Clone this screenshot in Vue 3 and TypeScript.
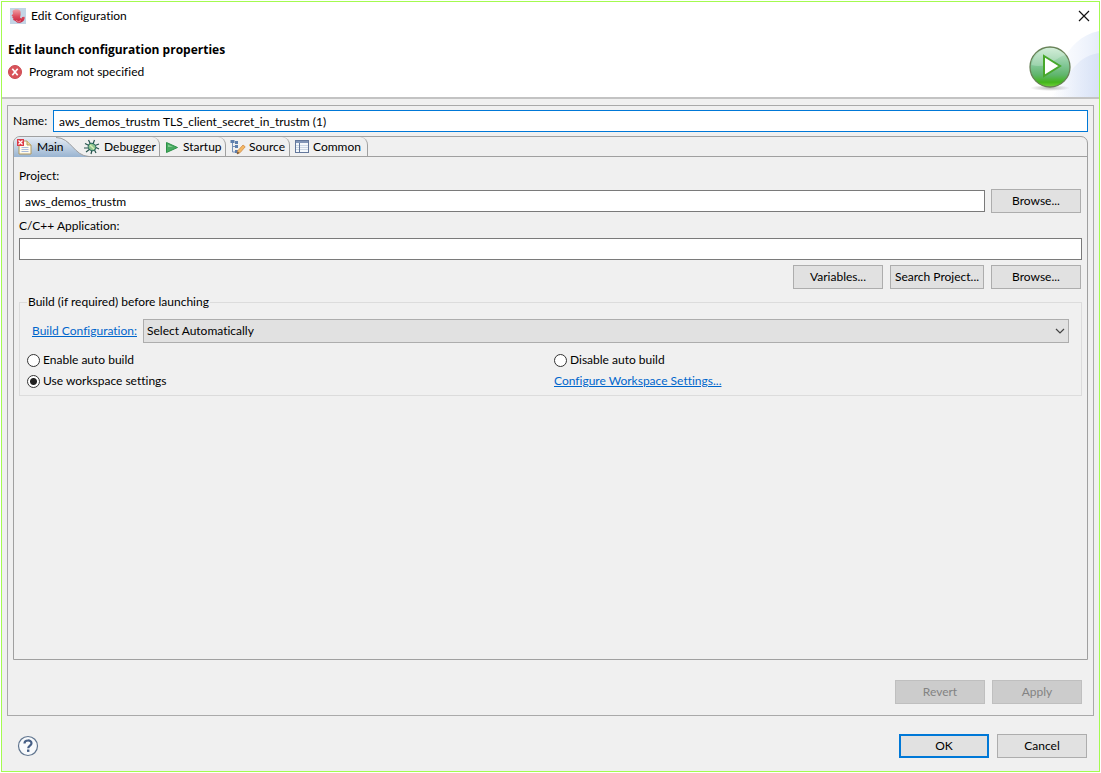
<script setup lang="ts">
import { ref } from 'vue'

const name = ref('aws_demos_trustm TLS_client_secret_in_trustm (1)')
const project = ref('aws_demos_trustm')
const application = ref('')
const buildConfig = ref('auto')
const autoBuild = ref('workspace')
</script>

<template>
  <main class="dialog">
    <header class="banner">
      <div class="titlebar">
        <svg class="app-icon" width="16" height="16" viewBox="0 0 16 16" aria-hidden="true">
          <defs>
            <linearGradient id="face" x1="0" y1="0" x2="0" y2="1">
              <stop offset="0" stop-color="#f0a3a8" />
              <stop offset="0.55" stop-color="#dc4c5c" />
              <stop offset="1" stop-color="#c4203c" />
            </linearGradient>
          </defs>
          <rect width="16" height="16" fill="#c3d5e6" />
          <path d="M2.500 3C4 .8 8.500 .6 10 2.500c1 1.500.6 2.800.6 4.500l-.6 2.500 1.500 1 .6-1.500 2.400-.3c.8 2.300-1 4.800-3.500 5.800-2.500.8-4.700.2-5.500-1.500L3.200 12l.2-1.600-1.200-.8.8-.8-1.500-1L3 5.800z" fill="url(#face)" />
          <path d="M6 12.500l2.500 1.200 2.500-1" fill="none" stroke="#f0a0a8" stroke-width="0.800" />
        </svg>
        <span class="window-title">Edit Configuration</span>
        <button class="close" type="button" aria-label="Close">
          <svg width="12" height="12" viewBox="0 0 12 12"><path d="M1 1l10 10M11 1L1 11" stroke="#111" stroke-width="1.200" /></svg>
        </button>
      </div>
      <h1>Edit launch configuration properties</h1>
      <p class="message">
        <svg width="14" height="14" viewBox="0 0 14 14" aria-hidden="true">
          <circle cx="7" cy="7" r="6.500" fill="#d9535a" stroke="#cb4a52" />
          <path d="M4.300 3.800l5.400 6.400M9.700 3.800L4.300 10.200" stroke="#fff" stroke-width="1.700" />
        </svg>
        <span>Program not specified</span>
      </p>
      <svg class="banner-art" width="72" height="66" viewBox="0 0 72 66" aria-hidden="true">
        <defs>
          <linearGradient id="wave" x1="0" y1="0" x2="1" y2="0">
            <stop offset="0.200" stop-color="#f1f5fd" stop-opacity="0" />
            <stop offset="1" stop-color="#e6edfa" />
          </linearGradient>
          <linearGradient id="wave2" x1="0" y1="0" x2="1" y2="0">
            <stop offset="0" stop-color="#e6edfa" stop-opacity="0" />
            <stop offset="1" stop-color="#d8e2f6" />
          </linearGradient>
          <linearGradient id="ball" x1="0" y1="0" x2="0" y2="1">
            <stop offset="0" stop-color="#c9ead0" />
            <stop offset="0.450" stop-color="#83c797" />
            <stop offset="0.700" stop-color="#5fb56c" />
            <stop offset="0.880" stop-color="#43b51b" />
            <stop offset="1" stop-color="#72d43b" />
          </linearGradient>
          <radialGradient id="shade"><stop offset="0" stop-color="#888" stop-opacity="0.600" /><stop offset="1" stop-color="#888" stop-opacity="0" /></radialGradient>
        </defs>
        <path d="M10 66C34 48 34 8 72 0v66z" fill="url(#wave)" />
        <path d="M24 66C42 48 46 26 72 22v44z" fill="url(#wave2)" />
        <ellipse cx="23" cy="57" rx="20" ry="3" fill="url(#shade)" />
        <circle cx="23" cy="36" r="20" fill="url(#ball)" stroke="#688157" stroke-width="1.300" />
        <path d="M4.500 34C8 17 26 11 39 24 30 25 21 39 4.500 34z" fill="#fff" opacity=".22" />
        <path d="M17 25L33 35 17 45z" fill="#fff" stroke="#47a82b" stroke-width="2" />
      </svg>
    </header>

    <section class="body">
      <div class="panel">
        <div class="name-row">
          <label for="name">Name:</label>
          <input id="name" v-model="name" class="field focused" type="text" />
        </div>

        <div class="folder">
          <div class="tabs" role="tablist">
            <button class="tab main" type="button" role="tab" aria-selected="true">
              <svg class="selected-shape" width="75" height="20" viewBox="0 0 75 20" aria-hidden="true">
                <defs>
                  <linearGradient id="sel" x1="0" y1="0" x2="0" y2="1">
                    <stop offset="0" stop-color="#e6ecf4" /><stop offset="1" stop-color="#99b4d1" />
                  </linearGradient>
                </defs>
                <path d="M0 20V7Q1 0 7 0H42C57 0 60 19 75 19.500V20z" fill="url(#sel)" />
                <path d="M42 .5C57 .5 60 19 75 19.500" fill="none" stroke="#a0a0a0" />
              </svg>
              <svg class="tab-icon" width="16" height="16" viewBox="0 0 16 16" aria-hidden="true">
                <path d="M4 2h6l4 4v9H2V5" fill="#fffbed" stroke="#b39a5c" />
                <path d="M10 2v4h4" fill="#ecd899" stroke="#b39a5c" />
                <path d="M4.500 8.500h7M4.500 10.500h7M4.500 12.500h7" stroke="#a9bbdc" />
                <rect width="7" height="7" fill="#dc3945" />
                <path d="M1.500 1.500l4 4M5.500 1.500l-4 4" stroke="#fff" stroke-width="1.200" />
              </svg>
              <span>Main</span>
            </button>
            <button class="tab debugger" type="button" role="tab" aria-selected="false">
              <svg class="tab-icon" width="16" height="16" viewBox="0 0 16 16" aria-hidden="true">
                <path d="M4.500 1l2 4M10.500 1L9 5M1 4.500l4 2M0 9h5M2 13l4-3M7 15l1-4M12 14l-2-4M15 10l-4-2M15 5l-4 1.500" stroke="#27534c" stroke-width="1.200" fill="none" />
                <ellipse cx="8" cy="8" rx="4" ry="3.500" transform="rotate(35 8 8)" fill="#8fc58e" stroke="#28675d" />
                <path d="M6 6l4 4" stroke="#d8edb5" stroke-width="1.400" />
              </svg>
              <span>Debugger</span>
            </button>
            <button class="tab startup" type="button" role="tab" aria-selected="false">
              <svg class="tab-icon" width="14" height="14" viewBox="0 0 14 14" aria-hidden="true">
                <path d="M1.500 2.500L12.500 7.500 1.500 12.500z" fill="#48ab61" stroke="#2d9248" stroke-linejoin="round" />
                <path d="M3 4.500l5 2.500H3z" fill="#83cc91" />
              </svg>
              <span>Startup</span>
            </button>
            <button class="tab source" type="button" role="tab" aria-selected="false">
              <svg class="tab-icon" width="16" height="16" viewBox="0 0 16 16" aria-hidden="true">
                <path d="M2.500 3v10H6M2.500 7.500H6" fill="none" stroke="#7690b7" />
                <path d="M.5 1h4v3h-4zM5 2h3v3H5zM5 6h3v3H5zM5 11h3v3H5z" fill="#5d7ead" />
                <path d="M7 15l1-3.500L13 6l2.200 1.800-5 5.800z" fill="#f4b864" stroke="#cf8a48" stroke-width="0.800" />
                <path d="M7 15l.7-2.300 1.600 1.300z" fill="#4a4038" />
              </svg>
              <span>Source</span>
            </button>
            <button class="tab common" type="button" role="tab" aria-selected="false">
              <svg class="tab-icon" width="14" height="13" viewBox="0 0 14 13" aria-hidden="true">
                <rect x=".5" y=".5" width="13" height="12" fill="#f4f8fc" stroke="#63779b" />
                <rect x="1" y="1" width="12" height="2" fill="#8195b7" />
                <path d="M4.500 3v9" stroke="#63779b" />
                <path d="M1 5.500h3M1 7.500h3M1 9.500h3M5 5.500h8M5 7.500h8M5 9.500h8" stroke="#cbd7e5" />
              </svg>
              <span>Common</span>
            </button>
          </div>

          <div class="page" role="tabpanel">
            <label class="caption" for="project">Project:</label>
            <div class="project-row">
              <input id="project" v-model="project" class="field" type="text" />
              <button class="btn" type="button">Browse...</button>
            </div>
            <label class="caption second" for="application">C/C++ Application:</label>
            <input id="application" v-model="application" class="field application" type="text" />
            <div class="actions">
              <button class="btn" type="button">Variables...</button>
              <button class="btn wide" type="button">Search Project...</button>
              <button class="btn" type="button">Browse...</button>
            </div>

            <fieldset class="build">
              <legend>Build (if required) before launching</legend>
              <div class="config-row">
                <a id="build-label" href="#">Build Configuration:</a>
                <div class="select-wrap">
                  <select v-model="buildConfig" aria-labelledby="build-label">
                    <option value="auto">Select Automatically</option>
                  </select>
                  <svg class="chevron" width="10" height="6" viewBox="0 0 10 6" aria-hidden="true"><path d="M1 1l4 4 4-4" fill="none" stroke="#444" stroke-width="1.200" /></svg>
                </div>
              </div>
              <div class="options">
                <label><input v-model="autoBuild" type="radio" name="auto" value="enable" />Enable auto build</label>
                <label><input v-model="autoBuild" type="radio" name="auto" value="disable" />Disable auto build</label>
                <label><input v-model="autoBuild" type="radio" name="auto" value="workspace" />Use workspace settings</label>
                <a href="#">Configure Workspace Settings...</a>
              </div>
            </fieldset>
          </div>
        </div>

        <div class="panel-actions">
          <button class="btn" type="button" disabled>Revert</button>
          <button class="btn" type="button" disabled>Apply</button>
        </div>
      </div>

      <footer class="footer">
        <button class="help" type="button" aria-label="Help">
          <svg width="22" height="22" viewBox="0 0 22 22">
            <circle cx="11" cy="11" r="9.500" fill="#f8fafc" stroke="#60758f" stroke-width="1.200" />
            <path d="M7.500 8.500C7.500 4.500 14.500 4.500 14.500 8.300c0 2.300-3.300 2.400-3.300 5" fill="none" stroke="#465f86" stroke-width="2.200" />
            <rect x="10" y="14.500" width="2.400" height="2.400" fill="#465f86" />
          </svg>
        </button>
        <button class="btn default" type="button">OK</button>
        <button class="btn" type="button">Cancel</button>
      </footer>
    </section>
  </main>
</template>

<style>
body {
  background: #fff;
}
</style>

<style scoped>
* {
  box-sizing: border-box;
}
.dialog {
  display: flex;
  flex-direction: column;
  min-height: calc(100vh - 2px);
  margin: 1px 1px 0;
  border: 1px solid #a4fb50;
  background: #f0f0f0;
  color: #000;
  font: 12px/16px Lato, "Open Sans", sans-serif;
  font-variant-ligatures: none;
}
button, input, select {
  font: inherit;
  font-variant-ligatures: none;
  color: inherit;
}
.banner {
  position: relative;
  height: 97px;
  background: #fff;
  border-bottom: 2px solid #c3c3c3;
}
.titlebar {
  display: flex;
  align-items: center;
  height: 28px;
  padding: 0 7px 0 8px;
}
.window-title {
  flex: 1;
  margin-left: 5px;
}
.close {
  display: flex;
  padding: 2px;
  border: 0;
  background: none;
}
h1 {
  margin: 10px 6px 0;
  font: 700 12px/20px "Open Sans", sans-serif;
}
.message {
  display: flex;
  align-items: center;
  gap: 7px;
  margin: 4px 6px 0;
}
.banner-art {
  position: absolute;
  right: 0;
  bottom: 0;
}
.body {
  flex: 1;
  display: flex;
  flex-direction: column;
  padding: 6px 5px 0;
}
.panel {
  flex: 1;
  display: flex;
  flex-direction: column;
  padding: 4px 5px 0;
  border: 1px solid #a9a9a9;
}
.name-row {
  display: flex;
  align-items: center;
  gap: 4px;
}
.name-row label {
  width: 36px;
  white-space: nowrap;
}
.field {
  flex: 1;
  min-width: 0;
  height: 22px;
  padding: 0 5px;
  border: 1px solid #7a7a7a;
  border-radius: 0;
  outline: 0;
  background: #fff;
}
.field.focused {
  border-color: #0078d7;
}
.folder {
  flex: 1;
  margin-top: 4px;
  border: 1px solid #a0a0a0;
  border-radius: 7px 7px 0 0;
}
.tabs {
  display: flex;
  height: 20px;
  border-bottom: 1px solid #a0a0a0;
}
.tab {
  display: flex;
  align-items: center;
  gap: 4px;
  padding: 0 0 0 5px;
  border: 0;
  border-right: 1px solid #a0a0a0;
  border-radius: 0 8px 0 0;
  background: none;
  white-space: nowrap;
}
.tab-icon {
  flex: none;
}
.tab.main {
  position: relative;
  width: 70px;
  padding-left: 3px;
  border: 0;
}
.tab.main > * {
  position: relative;
}
.tab.main .selected-shape {
  position: absolute;
  left: 0;
  top: 0;
}
.tab.debugger {
  width: 76px;
  padding-left: 0;
}
.tab.startup {
  width: 66px;
}
.tab.source {
  width: 64px;
  padding-left: 4px;
  gap: 3px;
}
.tab.common {
  width: 78px;
}
.page {
  padding: 11px 5px 0;
}
.caption {
  display: block;
}
.project-row {
  display: flex;
  align-items: center;
  gap: 6px;
  margin-top: 5px;
  padding-right: 1px;
}
.btn {
  width: 90px;
  height: 24px;
  padding: 0;
  border: 1px solid #adadad;
  border-radius: 0;
  background: #e1e1e1;
  white-space: nowrap;
}
.btn:disabled {
  border-color: #bfbfbf;
  background: #ccc;
  color: #838383;
}
.btn.wide {
  width: 94px;
}
.btn.default {
  border: 2px solid #0078d7;
}
.caption.second {
  margin-top: 5px;
}
.application {
  display: block;
  width: 100%;
  margin-top: 4px;
}
.actions {
  display: flex;
  justify-content: flex-end;
  gap: 7px;
  margin-top: 5px;
  padding-right: 1px;
}
.build {
  min-width: 0;
  margin: 5px 0 0;
  padding: 9px 0 6px 7px;
  border: 1px solid #dcdcdc;
}
.build legend {
  padding: 0 1px;
}
a {
  color: #0066cc;
}
.config-row {
  display: flex;
  align-items: center;
  gap: 6px;
  padding: 0 12px 0 5px;
}
.select-wrap {
  position: relative;
  flex: 1;
}
.select-wrap select {
  display: block;
  width: 100%;
  height: 24px;
  padding: 0 3px;
  appearance: none;
  border: 1px solid #adadad;
  border-radius: 0;
  background: #e1e1e1;
}
.chevron {
  position: absolute;
  right: 4px;
  top: 9px;
}
.options {
  display: grid;
  grid-template-columns: 1fr 1fr;
  row-gap: 5px;
  margin-top: 9px;
}
.options label {
  display: flex;
  align-items: center;
  gap: 3px;
}
.options input {
  appearance: none;
  width: 13px;
  height: 13px;
  margin: 0;
  border: 1px solid #333;
  border-radius: 50%;
  background: #fff;
}
.options input:checked {
  background: radial-gradient(circle, #222 0 3px, #fff 4px);
}
.panel-actions {
  display: flex;
  justify-content: flex-end;
  gap: 7px;
  padding: 20px 6px 11px 0;
}
.footer {
  display: flex;
  align-items: center;
  gap: 8px;
  padding: 18px 7px 13px 10px;
}
.help {
  display: flex;
  margin-right: auto;
  padding: 0;
  border: 0;
  background: none;
}
</style>
